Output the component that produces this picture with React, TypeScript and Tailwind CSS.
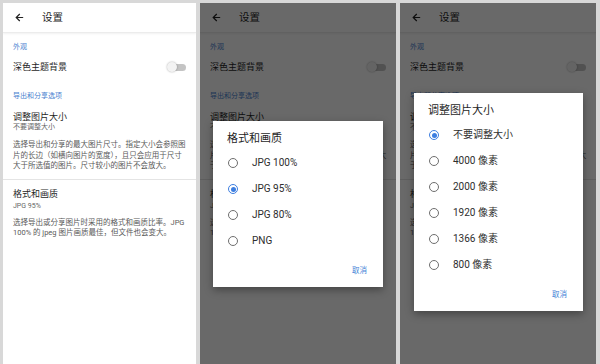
import { ArrowLeft } from "lucide-react";

const font = { fontFamily: 'Roboto, "Noto Sans CJK SC", sans-serif' };

function Toggle() {
  return (
    <div className="relative mr-[10px] h-[10px] w-[19px]">
      <div className="absolute left-[3px] top-[2px] h-[7px] w-[16px] rounded-full bg-[#c4c4c4]" />
      <div className="absolute left-0 top-0 h-[10px] w-[10px] rounded-full bg-[#f3f3f3] shadow-[0_0_2px_rgba(0,0,0,0.35)]" />
    </div>
  );
}

function Settings() {
  return (
    <div className="flex flex-col">
      {/* Header */}
      <div className="flex h-[30px] items-center border-b border-[#ececec] shadow-[0_1px_2px_rgba(0,0,0,0.06)]">
        <ArrowLeft size={11} strokeWidth={2.6} className="ml-[11px] text-[#222]" />
        <span className="ml-[17px] text-[10.5px] leading-[14px] text-[#1f1f1f]">设置</span>
      </div>

      <div className="flex flex-col pl-[10px]">
        <div className="mt-[9px] text-[7px] leading-[10px] text-[#4a82cf]">外观</div>
        <div className="mt-[9px] flex items-center justify-between">
          <span className="text-[9px] leading-[12px] text-[#1f1f1f]">深色主题背景</span>
          <Toggle />
        </div>

        <div className="mt-[18px] text-[7px] leading-[10px] text-[#4a82cf]">导出和分享选项</div>
        <div className="mt-[11px] text-[9px] leading-[10px] text-[#1f1f1f]">调整图片大小</div>
        <div className="text-[7px] leading-[10px] text-[#666]">不要调整大小</div>
        <p className="mt-[8px] pr-[8px] text-[7.5px] leading-[10.5px] text-[#5a5a5a]">
          选择导出和分享的最大图片尺寸。指定大小会参照图片的长边（如横向图片的宽度），且只会应用于尺寸大于所选值的图片。尺寸较小的图片不会放大。
        </p>
      </div>

      <div className="mt-[7px] h-px bg-[#e4e4e4]" />

      <div className="flex flex-col pl-[10px]">
        <div className="mt-[8px] text-[9px] leading-[12px] text-[#1f1f1f]">格式和画质</div>
        <div className="mt-[1px] text-[7px] leading-[10px] text-[#666]">JPG 95%</div>
        <p className="mt-[7px] pr-[8px] text-[7.5px] leading-[10.5px] text-[#5a5a5a]">
          选择导出或分享图片时采用的格式和画质比率。JPG 100% 的 jpeg 图片画质最佳，但文件也会变大。
        </p>
      </div>
    </div>
  );
}

function Radio({ checked }: { checked: boolean }) {
  return checked ? (
    <div className="flex h-[10px] w-[10px] items-center justify-center rounded-full border border-[#3d7ee0]">
      <div className="h-[5px] w-[5px] rounded-full bg-[#3d7ee0]" />
    </div>
  ) : (
    <div className="h-[10px] w-[10px] rounded-full border border-[#6e6e6e]" />
  );
}

function Dialog({
  title,
  options,
  selected,
  className,
}: {
  title: string;
  options: string[];
  selected: number;
  className: string;
}) {
  return (
    <div className={className}>
      <div className="pl-[14px] pt-[11px] text-[11px] leading-[14px] text-[#1f1f1f]">{title}</div>
      <ul className="mt-[4px] flex flex-col">
        {options.map((o, i) => (
          <li key={o} className="flex h-[26px] items-center pl-[15px]">
            <Radio checked={i === selected} />
            <span className="ml-[14px] text-[10px] leading-[12px] text-[#2e2e2e]">{o}</span>
          </li>
        ))}
      </ul>
      <div className="mt-[11px] flex justify-end pb-[10px] pr-[16px]">
        <span className="text-[7.5px] leading-[12px] text-[#3f7fd6]">取消</span>
      </div>
    </div>
  );
}

export default function App() {
  return (
    <div style={font} className="flex h-[364px] w-[600px] gap-[4px] overflow-hidden bg-[#d8d8d8] pl-[3px] pt-[3px]">
      <div className="h-[361px] w-[193px] overflow-hidden bg-white">
        <Settings />
      </div>

      <div className="relative h-[361px] w-[196px] overflow-hidden bg-white">
        <Settings />
        <div className="absolute inset-0 bg-black/[0.59]" />
        <Dialog
          title="格式和画质"
          options={["JPG 100%", "JPG 95%", "JPG 80%", "PNG"]}
          selected={1}
          className="absolute left-[13px] top-[118px] w-[170px] bg-white shadow-[0_3px_8px_rgba(0,0,0,0.35)]"
        />
      </div>

      <div className="relative h-[361px] w-[196px] overflow-hidden bg-white">
        <Settings />
        <div className="absolute inset-0 bg-black/[0.59]" />
        <Dialog
          title="调整图片大小"
          options={["不要调整大小", "4000 像素", "2000 像素", "1920 像素", "1366 像素", "800 像素"]}
          selected={0}
          className="absolute left-[14px] top-[90px] w-[169px] bg-white shadow-[0_3px_8px_rgba(0,0,0,0.35)]"
        />
      </div>
    </div>
  );
}
